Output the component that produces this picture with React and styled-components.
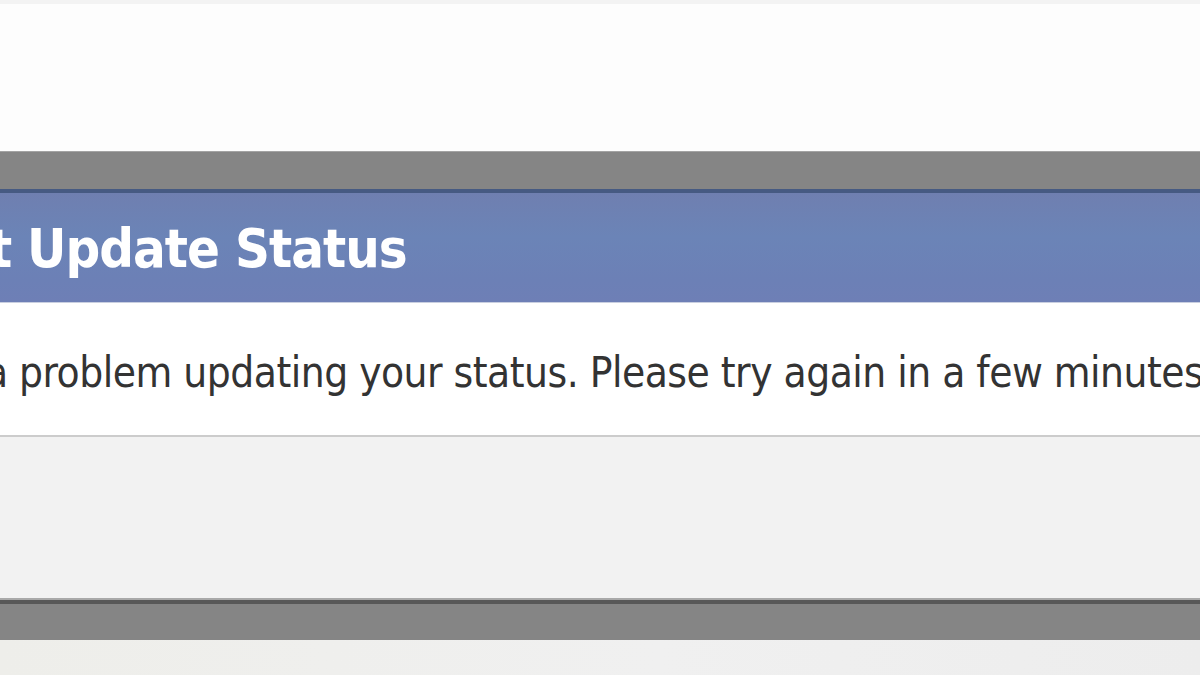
import React from "react";
import styled, { createGlobalStyle } from "styled-components";

const GlobalStyle = createGlobalStyle`
  html, body {
    margin: 0;
    padding: 0;
    background: #fdfdfd;
    overflow: hidden;
  }
  #root {
    width: 1200px;
    height: 675px;
  }
`;

const Page = styled.div`
  display: flex;
  flex-direction: column;
  width: 1200px;
  height: 675px;
  font-family: "DejaVu Sans Condensed", "DejaVu Sans", Tahoma, sans-serif;
`;

const TopStrip = styled.div`
  height: 4px;
  background: #f3f3f3;
`;

const Backdrop = styled.div`
  height: 147px;
  background: #fdfdfd;
`;

const Frame = styled.div`
  display: flex;
  flex-direction: column;
  background: #858585;
  border-top: 1px solid #a3a3a3;
  padding-top: 37px;
  padding-bottom: 36px;
`;

const Dialog = styled.div`
  display: flex;
  flex-direction: column;
  overflow: hidden;
  border-bottom: 4px solid #585858;
`;

const Header = styled.div`
  height: 109px;
  border-top: 4px solid #465a82;
  background: linear-gradient(#6f7fb0, #6b84b7 40%, #6c80b6 80%, #6e7fb6);
  border-bottom: 1px solid #c9cfe0;
  display: flex;
  align-items: center;
`;

const Title = styled.h1`
  margin: 0;
  white-space: nowrap;
  color: #ffffff;
  font-size: 54px;
  font-weight: bold;
  letter-spacing: -1px;
  margin-left: ${(p) => p.$shift}px;
  padding-top: 2px;
`;

const Body = styled.div`
  height: 132px;
  background: #ffffff;
  display: flex;
  align-items: center;
  border-bottom: 2px solid #cccccc;
`;

const Message = styled.p`
  margin: 0;
  white-space: nowrap;
  color: #333333;
  font-size: 42px;
  letter-spacing: -0.5px;
  margin-left: ${(p) => p.$shift}px;
  padding-top: 6px;
`;

const Footer = styled.div`
  height: 161px;
  background: #f2f2f2;
  border-bottom: 2px solid #a9a9a9;
`;

const Below = styled.div`
  flex: 1;
  background: linear-gradient(90deg, #eeeeea, #f0f0f0 55%, #ededed);
`;

export default function App() {
  return (
    <>
      <GlobalStyle />
      <Page>
        <TopStrip />
        <Backdrop />
        <Frame>
          <Dialog>
            <Header>
              <Title $shift={-243}>Could not Update Status</Title>
            </Header>
            <Body>
              <Message $shift={-216}>
                There was a problem updating your status. Please try again in a
                few minutes.
              </Message>
            </Body>
            <Footer />
          </Dialog>
        </Frame>
        <Below />
      </Page>
    </>
  );
}
